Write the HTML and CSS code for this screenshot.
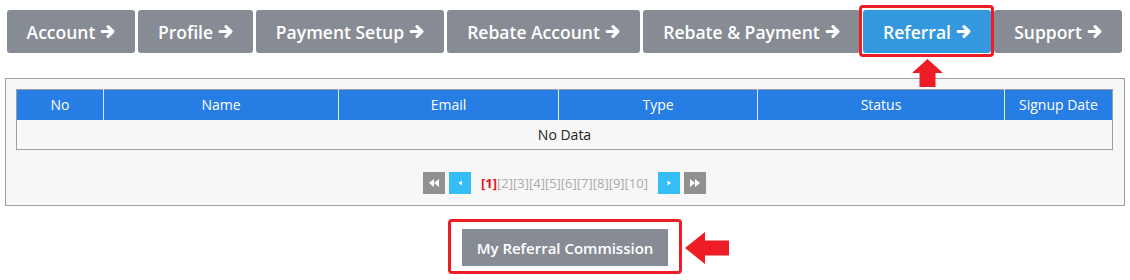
FILE: index.html
```html
<!DOCTYPE html>
<html lang="en">
<head>
    <meta charset="UTF-8">
    <title>Referral</title>
    <link rel="stylesheet" href="styles.css">
</head>
<body>
    <div class="tabs">
        <a class="tab t-account">Account <svg class="arr" viewBox="0 0 14 14"><path d="M2 7h9M7.5 2.5L12 7l-4.5 4.5"/></svg></a>
        <a class="tab t-profile">Profile <svg class="arr" viewBox="0 0 14 14"><path d="M2 7h9M7.5 2.5L12 7l-4.5 4.5"/></svg></a>
        <a class="tab t-payment">Payment Setup <svg class="arr" viewBox="0 0 14 14"><path d="M2 7h9M7.5 2.5L12 7l-4.5 4.5"/></svg></a>
        <a class="tab t-rebate">Rebate Account <svg class="arr" viewBox="0 0 14 14"><path d="M2 7h9M7.5 2.5L12 7l-4.5 4.5"/></svg></a>
        <a class="tab t-rebpay">Rebate &amp; Payment <svg class="arr" viewBox="0 0 14 14"><path d="M2 7h9M7.5 2.5L12 7l-4.5 4.5"/></svg></a>
        <a class="tab t-referral active">Referral <svg class="arr" viewBox="0 0 14 14"><path d="M2 7h9M7.5 2.5L12 7l-4.5 4.5"/></svg>
            <svg class="mark-up" viewBox="0 0 31 28"><path d="M15.5 0L31 14H23.5V28H7.5V14H0Z"/></svg>
        </a>
        <a class="tab t-support">Support <svg class="arr" viewBox="0 0 14 14"><path d="M2 7h9M7.5 2.5L12 7l-4.5 4.5"/></svg></a>
    </div>

    <div class="panel">
        <table class="list">
            <thead>
                <tr>
                    <th class="c-no">No</th>
                    <th class="c-name">Name</th>
                    <th class="c-email">Email</th>
                    <th class="c-type">Type</th>
                    <th class="c-status">Status</th>
                    <th>Signup Date</th>
                </tr>
            </thead>
            <tbody>
                <tr><td colspan="6">No Data</td></tr>
            </tbody>
        </table>

        <div class="pager">
            <span class="pg grey"><svg viewBox="0 0 10 8"><path d="M5 0v8L0 4zM10 0v8L5 4z"/></svg></span>
            <span class="pg blue"><svg viewBox="0 0 10 8"><path d="M7 1.5v5L3.5 4z"/></svg></span>
            <span class="pages"><b>[1]</b>[2][3][4][5][6][7][8][9][10]</span>
            <span class="pg blue"><svg viewBox="0 0 10 8"><path d="M3.5 1.5v5L7 4z"/></svg></span>
            <span class="pg grey"><svg viewBox="0 0 10 8"><path d="M0 0v8L5 4zM5 0v8L10 4z"/></svg></span>
        </div>
    </div>

    <div class="bottom">
        <div class="hl">
            <button class="commission">My Referral Commission</button>
            <svg class="mark-left" viewBox="0 0 44 32"><path d="M0 16L20 0V8.5H44V23.5H20V32Z"/></svg>
        </div>
    </div>
</body>
</html>
```

FILE: styles.css
```css
* { box-sizing: border-box; }
body {
    margin: 0;
    padding-top: 10px;
    font-family: 'Open Sans', 'Liberation Sans', sans-serif;
    background: #fff;
    color: #333;
}
.tabs {
    display: flex;
    gap: 3px;
    padding-left: 7px;
}
.tab {
    position: relative;
    display: flex;
    flex-shrink: 0;
    align-items: center;
    justify-content: center;
    gap: 5px;
    height: 43px;
    background: #878c94;
    color: #fff;
    font-size: 17.5px;
    font-weight: 600;
    white-space: nowrap;
    border-radius: 3px;
}
.t-account { width: 128px; }
.t-profile { width: 115px; }
.t-payment { width: 188px; }
.t-rebate { width: 193px; }
.t-rebpay { width: 217px; }
.t-referral { width: 128px; }
.t-support { width: 128px; }
.tab .arr {
    width: 15px;
    height: 15px;
    fill: none;
    stroke: #fff;
    stroke-width: 3;
    stroke-linecap: round;
    stroke-linejoin: round;
}
.tab.active { background: #3398dd; }
.tab.active::after {
    content: "";
    position: absolute;
    top: -5px;
    bottom: -4px;
    left: -4px;
    right: -3px;
    border: 3px solid #ee1c25;
    border-radius: 4px;
}
.mark-up {
    position: absolute;
    width: 31px;
    height: 28px;
    top: 49px;
    left: calc(50% - 15px);
    fill: #ee1c25;
}
.panel {
    margin: 25px 5px 0;
    padding: 10px 11px 11px 10px;
    border: 1px solid #9f9f9f;
    background: #f7f7f7;
}
.list {
    width: 100%;
    border-collapse: collapse;
    border: 1px solid #9f9f9f;
    font-size: 14px;
}
.list th {
    height: 30px;
    padding: 0;
    background: #267de3;
    color: #fff;
    font-weight: 400;
    border-left: 1px solid #dfe9f5;
}
.list th:first-child { border-left: none; }
.c-no { width: 87px; }
.c-name { width: 235px; }
.c-email { width: 220px; }
.c-type { width: 199px; }
.c-status { width: 247px; }
.list td {
    height: 30px;
    text-align: center;
    color: #222;
}
.pager {
    display: flex;
    justify-content: center;
    align-items: center;
    margin-top: 22px;
    height: 22px;
}
.pg {
    display: flex;
    align-items: center;
    justify-content: center;
    width: 22px;
    height: 22px;
    margin: 0 2px;
}
.pg svg { width: 10px; height: 8px; fill: #fff; }
.pg.grey { background: #919191; }
.pg.blue { background: #35bdf5; }
.pages {
    margin: 0 8px;
    font-size: 13px;
    color: #aaa;
}
.pages b { color: #e8121a; }
.bottom {
    display: flex;
    justify-content: center;
    margin-top: 13px;
}
.hl {
    position: relative;
    padding: 7px 11px 5px;
    border: 3px solid #ee1c25;
    border-radius: 4px;
}
.commission {
    width: 206px;
    height: 37px;
    border: none;
    background: #878c94;
    color: #fff;
    font-family: 'Open Sans', 'Liberation Sans', sans-serif;
    font-size: 15px;
    font-weight: 600;
}
.mark-left {
    position: absolute;
    width: 44px;
    height: 32px;
    top: 10px;
    left: 234px;
    fill: #ee1c25;
}
```
